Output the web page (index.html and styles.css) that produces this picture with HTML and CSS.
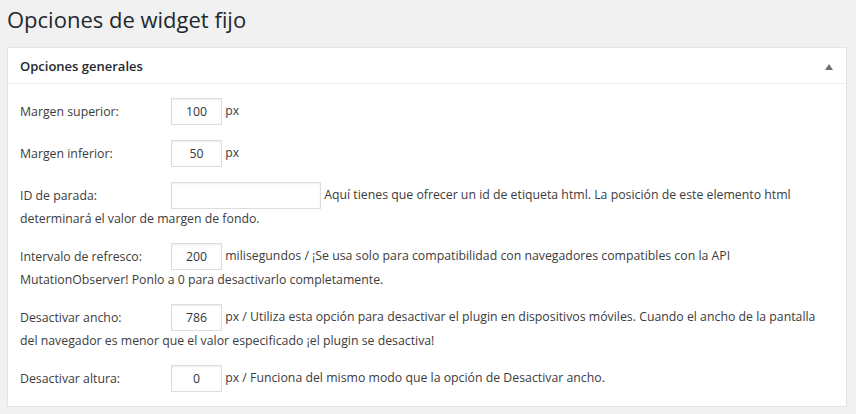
FILE: index.html
```html
<!DOCTYPE html>
<html lang="es">
<head>
    <meta charset="UTF-8">
    <meta name="viewport" content="width=device-width, initial-scale=1.0">
    <title>Opciones de widget fijo</title>
    <link rel="stylesheet" href="styles.css">
</head>
<body>

    <div class="wrap">
        <h1>Opciones de widget fijo</h1>

        <div class="postbox">
            <div class="postbox-header">
                <h2>Opciones generales</h2>
                <span class="toggle-arrow"></span>
            </div>

            <div class="inside">
                <div class="option-row">
                    <label for="margin-top">Margen superior:</label><input type="text" class="small-input" id="margin-top" value="100"> px
                </div>

                <div class="option-row">
                    <label for="margin-bottom">Margen inferior:</label><input type="text" class="small-input" id="margin-bottom" value="50"> px
                </div>

                <div class="option-row">
                    <label for="stop-id">ID de parada:</label><input type="text" class="wide-input" id="stop-id" value=""> Aquí tienes que ofrecer un id de etiqueta html. La posición de este elemento html determinará el valor de margen de fondo.
                </div>

                <div class="option-row">
                    <label for="refresh">Intervalo de refresco:</label><input type="text" class="small-input" id="refresh" value="200"> milisegundos / ¡Se usa solo para compatibilidad con navegadores compatibles con la API MutationObserver! Ponlo a 0 para desactivarlo completamente.
                </div>

                <div class="option-row">
                    <label for="disable-width">Desactivar ancho:</label><input type="text" class="small-input" id="disable-width" value="786"> px / Utiliza esta opción para desactivar el plugin en dispositivos móviles. Cuando el ancho de la pantalla del navegador es menor que el valor especificado ¡el plugin se desactiva!
                </div>

                <div class="option-row">
                    <label for="disable-height">Desactivar altura:</label><input type="text" class="small-input" id="disable-height" value="0"> px / Funciona del mismo modo que la opción de Desactivar ancho.
                </div>
            </div>
        </div>
    </div>

</body>
</html>
```
FILE: styles.css
```css
* {
    margin: 0;
    padding: 0;
    box-sizing: border-box;
    font-family: 'Open Sans', 'Noto Sans', sans-serif;
}

body {
    background-color: #f1f1f1;
    color: #3c3c3c;
    font-size: 12.3px;
}

.wrap {
    padding: 5px 9px 0 7px;
}

.wrap h1 {
    font-size: 22px;
    font-weight: 400;
    line-height: 29px;
    color: #23282d;
    margin-bottom: 13px;
}

.postbox {
    background-color: #fff;
    border: 1px solid #e5e5e5;
    box-shadow: 0 1px 1px rgba(0, 0, 0, 0.04);
}

.postbox-header {
    display: flex;
    align-items: center;
    justify-content: space-between;
    height: 36px;
    padding: 0 12px;
    border-bottom: 1px solid #eee;
}

.postbox-header h2 {
    font-size: 13px;
    font-weight: 600;
    color: #23282d;
}

.toggle-arrow {
    width: 0;
    height: 0;
    margin-top: 3px;
    margin-right: 1px;
    border-left: 4px solid transparent;
    border-right: 4px solid transparent;
    border-bottom: 6px solid #6c7177;
}

.inside {
    display: flex;
    flex-direction: column;
    gap: 15px;
    padding: 14px 12px 14px;
}

.option-row {
    line-height: 19px;
}

.option-row label {
    display: inline-block;
    width: 151px;
    vertical-align: middle;
}

.option-row input {
    height: 27px;
    padding: 0 8px;
    font-size: 12.3px;
    color: #32373c;
    background-color: #fff;
    border: 1px solid #ddd;
    box-shadow: inset 0 1px 2px rgba(0, 0, 0, 0.07);
    vertical-align: middle;
    outline: none;
}

.small-input {
    width: 51px;
    text-align: center;
}

.wide-input {
    width: 150px;
}
```
